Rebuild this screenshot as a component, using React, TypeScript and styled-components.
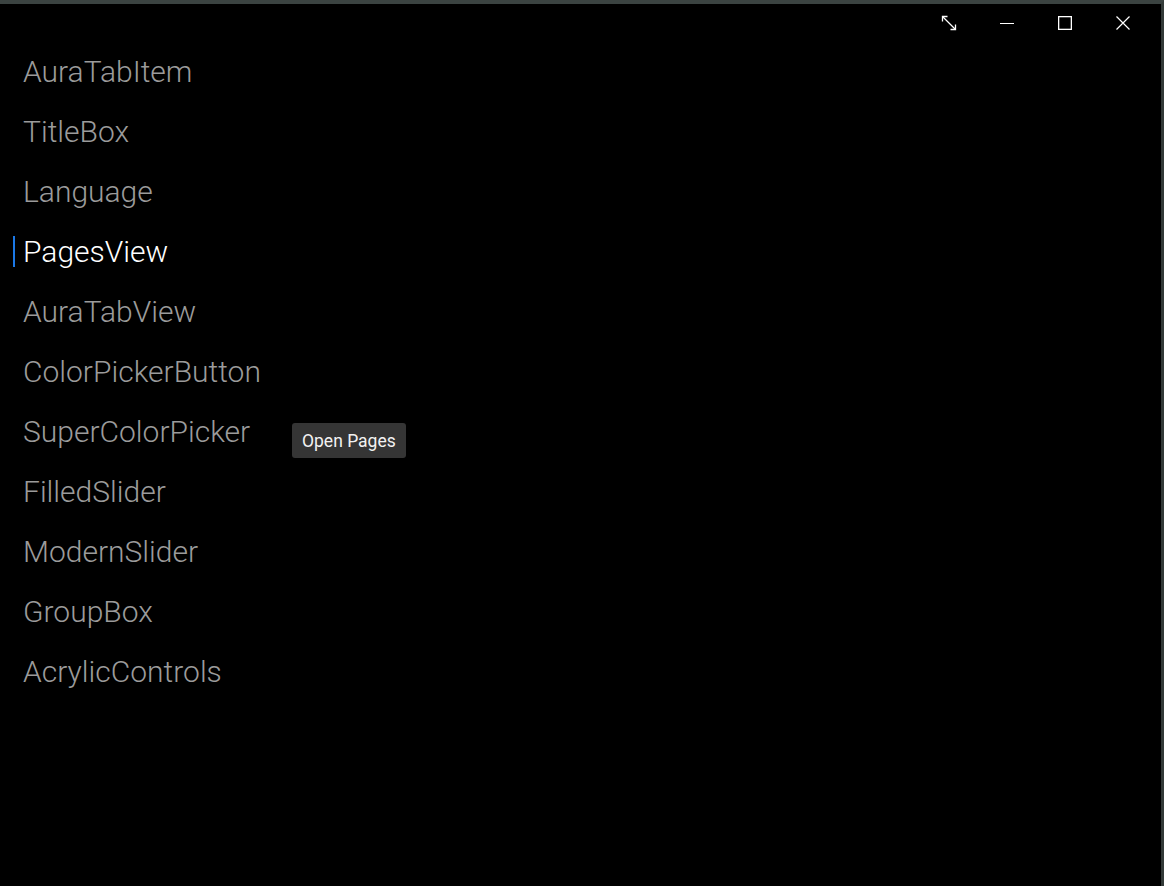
import React from "react";
import styled, { createGlobalStyle } from "styled-components";

const GlobalStyle = createGlobalStyle`
  html, body {
    margin: 0;
    padding: 0;
    background: #000;
  }
  body {
    font-family: Roboto, "Liberation Sans", sans-serif;
  }
`;

const Window = styled.div`
  box-sizing: border-box;
  width: 1164px;
  height: 886px;
  background: #000;
  border-top: 4px solid #3b4341;
  border-right: 3px solid #333a38;
  display: flex;
  flex-direction: column;
  position: relative;
`;

const TitleBar = styled.div`
  display: flex;
  justify-content: flex-end;
  align-items: flex-start;
  height: 37px;
  padding-right: 9px;
`;

const CaptionButton = styled.button`
  width: 58px;
  height: 38px;
  border: 0;
  padding: 0;
  background: transparent;
  color: #fff;
  display: flex;
  align-items: center;
  justify-content: center;
  cursor: default;
`;

const Menu = styled.ul`
  list-style: none;
  margin: 0;
  padding: 0;
  display: flex;
  flex-direction: column;
`;

const Item = styled.li<{ $active?: boolean }>`
  position: relative;
  height: 60px;
  display: flex;
  align-items: center;
  padding-left: 23px;
  font-size: 30px;
  font-weight: 300;
  color: ${(p) => (p.$active ? "#ffffff" : "#9b9b9b")};

  &::before {
    content: "";
    display: ${(p) => (p.$active ? "block" : "none")};
    position: absolute;
    left: 13px;
    top: 15px;
    width: 2px;
    height: 31px;
    background: #1b78e6;
  }
`;

const Tooltip = styled.div`
  position: absolute;
  left: 292px;
  top: 419px;
  height: 35px;
  padding: 0 10px;
  box-sizing: border-box;
  display: flex;
  align-items: center;
  background: #353535;
  border-radius: 3px;
  color: #f2f2f2;
  font-size: 17.5px;
  font-weight: 400;
`;

const items = [
  "AuraTabItem",
  "TitleBox",
  "Language",
  "PagesView",
  "AuraTabView",
  "ColorPickerButton",
  "SuperColorPicker",
  "FilledSlider",
  "ModernSlider",
  "GroupBox",
  "AcrylicControls",
];

export default function App() {
  return (
    <>
      <GlobalStyle />
      <Window>
        <TitleBar>
          <CaptionButton aria-label="Resize">
            <svg width="16" height="16" viewBox="0 0 16 16" fill="none" stroke="currentColor" strokeWidth="1.3">
              <path d="M1.5 1.5 L14.5 14.5" />
              <path d="M1.5 6.5 V1.5 H6.5" />
              <path d="M14.5 9.5 V14.5 H9.5" />
            </svg>
          </CaptionButton>
          <CaptionButton aria-label="Minimize">
            <svg width="14" height="14" viewBox="0 0 14 14" fill="none" stroke="currentColor" strokeWidth="1">
              <path d="M0 7.5 H14" />
            </svg>
          </CaptionButton>
          <CaptionButton aria-label="Maximize">
            <svg width="14" height="14" viewBox="0 0 14 14" fill="none" stroke="currentColor" strokeWidth="1.3">
              <rect x="0.65" y="0.65" width="12.7" height="12.7" />
            </svg>
          </CaptionButton>
          <CaptionButton aria-label="Close">
            <svg width="14" height="14" viewBox="0 0 14 14" fill="none" stroke="currentColor" strokeWidth="1.2">
              <path d="M0.5 0.5 L13.5 13.5 M13.5 0.5 L0.5 13.5" />
            </svg>
          </CaptionButton>
        </TitleBar>
        <Menu>
          {items.map((name) => (
            <Item key={name} $active={name === "PagesView"}>
              {name}
            </Item>
          ))}
        </Menu>
        <Tooltip>Open Pages</Tooltip>
      </Window>
    </>
  );
}
